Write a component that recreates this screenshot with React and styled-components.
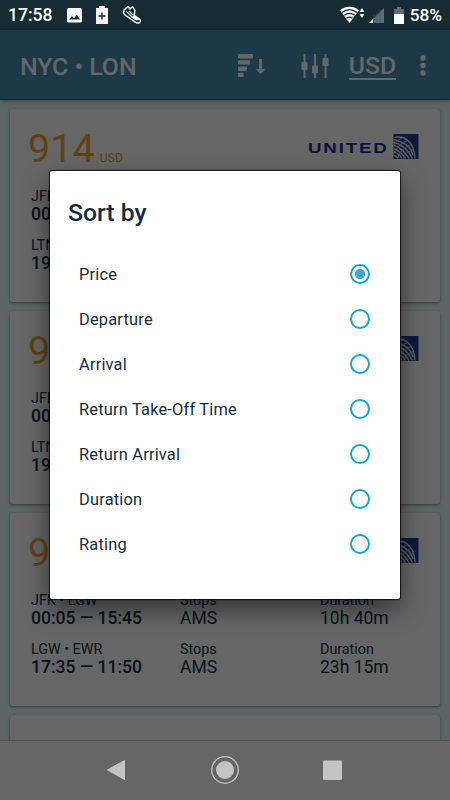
import React, { useState } from 'react';
import styled, { createGlobalStyle } from 'styled-components';

const GlobalStyle = createGlobalStyle`
  * {
    box-sizing: border-box;
  }

  body {
    margin: 0;
    font-family: Roboto, sans-serif;
  }
`;

const Screen = styled.div`
  position: relative;
  width: 450px;
  height: 800px;
  display: flex;
  flex-direction: column;
  overflow: hidden;
  background: #e9fafa;
`;

const StatusBar = styled.header`
  flex: none;
  height: 30px;
  display: flex;
  align-items: center;
  padding: 0 8px 0 8px;
  background: #172b35;
  color: white;
  font-size: 17.5px;
  font-weight: 500;
  line-height: 30px;
`;

const StatusGroup = styled.div`
  height: 30px;
  display: flex;
  align-items: center;
  margin-left: ${props => props.$end ? 'auto' : '15px'};
  gap: ${props => props.$gap};
`;

const BatteryIcon = styled.svg`
  margin-left: 6px;
`;

const Percent = styled.span`
  margin-left: 2px;
  font-size: 17.3px;
`;

const AppBar = styled.nav`
  flex: none;
  height: 70px;
  display: flex;
  align-items: center;
  padding: 2px 24px 0 20px;
  background: #4690b2;
  border-bottom: 1px solid #20779d;
  box-shadow: 0 1px 4px rgba(0, 0, 0, 0.35);
  color: white;
`;

const Route = styled.h1`
  flex: 1;
  margin: 2px 0 0;
  font-size: 24.8px;
  font-weight: 500;
`;

const Actions = styled.div`
  display: flex;
  align-items: center;
`;

const ActionIcons = styled.div`
  display: flex;
  gap: 35px;
`;

const Currency = styled.span`
  margin: 3px 24px 0 20px;
  border-bottom: 2px solid white;
  font-size: 24.7px;
  font-weight: 500;
  line-height: 24px;
`;

const Results = styled.main`
  flex: 1;
  min-height: 0;
  display: flex;
  flex-direction: column;
  gap: 9px;
  padding: 9px 10px 0;
  overflow: hidden;
`;

const Card = styled.article`
  flex: none;
  height: 193px;
  padding: 18px 20px 0 18px;
  border-radius: 3px;
  background: white;
  box-shadow: 0 1px 3px rgba(0, 0, 0, 0.45);
  color: #12344c;
`;

const CardTop = styled.div`
  height: 46px;
  display: flex;
  justify-content: space-between;
`;

const Price = styled.div`
  color: #f5a42c;
  font-size: 39.6px;
  font-weight: 400;
  line-height: 44px;

  small {
    margin-left: 5px;
    font-size: 12.3px;
    font-weight: 400;
  }
`;

const Flight = styled.div`
  height: 49px;
  display: grid;
  grid-template-columns: 149px 140px 1fr;
  padding: 15px 0 0 3px;
`;

const Label = styled.div`
  font-size: 14.3px;
  line-height: 17px;
`;

const Value = styled.div`
  font-size: 17.5px;
  font-weight: ${props => props.$strong ? 500 : 400};
  line-height: 19px;
  white-space: nowrap;
`;

const NavBar = styled.footer`
  flex: none;
  height: 60px;
  display: flex;
  justify-content: center;
  border-top: 1px solid #505354;
  background: #666;
`;

const Scrim = styled.div`
  position: absolute;
  top: 30px;
  right: 0;
  bottom: 60px;
  left: 0;
  display: flex;
  justify-content: center;
  align-items: center;
  background: rgba(0, 0, 0, 0.6);
`;

const Dialog = styled.section`
  width: 350px;
  height: 428px;
  padding: 25px 30px 0 18px;
  border-radius: 2px;
  background: white;
  box-shadow: 0 0 1px 1px rgba(0, 0, 0, 0.75), 0 10px 24px rgba(0, 0, 0, 0.5);
  color: #142c3c;
`;

const DialogTitle = styled.h2`
  margin: 0 0 21px;
  font-size: 24.7px;
  font-weight: 500;
  line-height: 34px;
`;

const Option = styled.label`
  height: 45px;
  display: flex;
  align-items: center;
  justify-content: space-between;
  padding: 1px 0 0 11px;
  font-size: 16.4px;
  letter-spacing: 0.2px;
`;

const Radio = styled.input`
  appearance: none;
  width: 20px;
  height: 20px;
  margin: 0 0 1px;
  border: 2px solid #0fa8c8;
  border-radius: 50%;
  background: ${props => props.checked ? 'radial-gradient(circle, #3aabc8 4.8px, transparent 5.4px)' : 'none'};
`;

const UnitedLogo = () => (
  <svg width="113" height="34" viewBox="0 0 113 34">
    <text
      x="1"
      y="26"
      textLength="80.5"
      fontFamily="Liberation Sans, sans-serif"
      fontSize="15.5"
      fontWeight="700"
      letterSpacing="1.5"
      lengthAdjust="spacingAndGlyphs"
      fill="#16349a"
    >
      UNITED
    </text>
    <g transform="translate(86.5 6)">
      <path fill="#1c4097" d="M0 1h25v25H0z" />
      <g fill="none" stroke="#dfe6f4" strokeWidth="1.4">
        <path d="M1 4.5C12 2 21 10 21.5 25.5" />
        <path d="M0 6.500Q16 10 19.500 22" />
        <path d="M0 9Q13 13 19 25.500" />
        <path d="M0 12Q10 16 15.500 25.500" />
        <path d="M0 15.500Q8 19 12 25.500" />
        <path d="M0 19Q6 21 8.500 25.500" />
        <path d="M0 22.500Q3 23 4.500 25.500" />
        <path strokeWidth="0.9" d="M0 12C3 8 6 6 9 5M0 21C4 13 9 9 15 7.5M4 25.5c3-8 8-12 14-14M10 25.500c2-5 6-8 10-9" />
      </g>
    </g>
  </svg>
);

const NotificationIcons = () => (
  <StatusGroup $gap="13px">
    <svg width="15" height="15" viewBox="0 0 15 15">
      <rect width="15" height="14.5" rx="1.5" fill="#fff" />
      <path d="M2 11.5 5 8l2 2.3L9.8 6.8 13 11.5z" fill="#172b35" />
    </svg>
    <svg width="14" height="18" viewBox="0 0 14 18">
      <path d="M4 0h6v2h3v16H1V2h3z" fill="#fff" />
      <path d="M7 6.5v7M3.5 10h7" stroke="#172b35" strokeWidth="1.5" />
    </svg>
    <svg width="20" height="20" viewBox="0 0 20 20">
      <path
        d="M1.5 8 2 5 6 1.5 8 4 10.5 1.5 13 5.500 12 10 18 14.500C19.5 18 16 19 13 17L3 10z"
        fill="none"
        stroke="#fff"
        strokeWidth="1.4"
        strokeLinejoin="round"
      />
      <path d="m4.5 6.5 6 6M7 6l4 4" stroke="#fff" strokeWidth="1.1" />
      <path d="m9.5 12.5 2.500-2.500 6 4.500-4 1z" fill="#fff" />
    </svg>
  </StatusGroup>
);

const SystemIcons = () => (
  <StatusGroup $end $gap="4px">
    <svg width="25" height="18" viewBox="0 0 25 18">
      <path d="M0 4.3C5.5-.3 13.5-.3 19 4.3L9.5 17z" fill="#fff" />
      <g fill="none" stroke="#172b35" strokeWidth="1.2">
        <path d="M2 6.5c5-3.7 10-3.7 15 0" />
        <path d="M4.3 9.3c3.5-2.5 7-2.5 10.5 0" />
        <path d="M6.5 12.2c2-1.4 4-1.4 6 0" />
      </g>
      <path d="m22 2 2.5 4h-5zM22 12l2.500-4h-5z" fill="#fff" />
    </svg>
    <svg width="15" height="15" viewBox="0 0 15 15">
      <path d="M0 15 15 0v15z" fill="#5c6d75" />
      <path d="m0 15 4-4v4z" fill="#fff" />
      <path d="M5 7v8M8 5v10M11 2v13" stroke="#42535c" strokeWidth="0.7" />
    </svg>
    <BatteryIcon width="10" height="17" viewBox="0 0 10 17">
      <path d="M3 0h4v2h3v6H0V2h3z" fill="#5c6d75" />
      <path d="M0 7h10v10H0z" fill="#fff" />
    </BatteryIcon>
    <Percent>58%</Percent>
  </StatusGroup>
);

const SortIcon = () => (
  <svg width="28" height="24" viewBox="0 0 28 24">
    <g fill="#fff">
      <rect width="15" height="4.5" rx="1" />
      <rect y="6.3" width="12" height="4.3" rx="1" />
      <rect y="12.6" width="9" height="4.3" rx="1" />
      <rect y="18.7" width="5.7" height="4.3" rx="1" />
      <path d="M21 5h3v10h3.5l-5 5-5-5H21z" />
    </g>
  </svg>
);

const FilterIcon = () => (
  <svg width="28" height="24" viewBox="0 0 28 24">
    <path d="M3.5 0v24M14 0v24M24.5 0v24" stroke="#fff" strokeWidth="2" />
    <g fill="#fff">
      <rect x="0.5" y="8" width="6" height="8" rx="1" />
      <rect x="11" y="11.5" width="6" height="8" rx="1" />
      <rect x="21.5" y="4" width="6" height="8" rx="1" />
    </g>
  </svg>
);

const TopBar = () => (
  <AppBar>
    <Route>NYC • LON</Route>
    <Actions>
      <ActionIcons>
        <SortIcon />
        <FilterIcon />
      </ActionIcons>
      <Currency>USD</Currency>
      <svg width="6" height="22" viewBox="0 0 6 22" fill="#fff">
        <circle cx="3" cy="3" r="2.7" />
        <circle cx="3" cy="10.5" r="2.7" />
        <circle cx="3" cy="18" r="2.7" />
      </svg>
    </Actions>
  </AppBar>
);

const firstLegs = [
  { route: 'JFK • LTN', time: '00:05 — 15:45', stops: 'AMS', duration: '10h 40m' },
  { route: 'LTN • EWR', time: '19:35 — 11:50', stops: 'AMS', duration: '21h 15m' }
];

const results = [
  { price: 914, legs: firstLegs },
  { price: 914, legs: firstLegs },
  {
    price: 914,
    legs: [
      { route: 'JFK • LGW', time: '00:05 — 15:45', stops: 'AMS', duration: '10h 40m' },
      { route: 'LGW • EWR', time: '17:35 — 11:50', stops: 'AMS', duration: '23h 15m' }
    ]
  }
];

const sortOptions = [
  'Price',
  'Departure',
  'Arrival',
  'Return Take-Off Time',
  'Return Arrival',
  'Duration',
  'Rating'
];

const FlightCard = ({ price, legs }) => (
  <Card>
    <CardTop>
      <Price>{price}<small>USD</small></Price>
      <UnitedLogo />
    </CardTop>
    {legs.map(leg => (
      <Flight key={leg.route}>
        <div>
          <Label>{leg.route}</Label>
          <Value $strong>{leg.time}</Value>
        </div>
        <div>
          <Label>Stops</Label>
          <Value>{leg.stops}</Value>
        </div>
        <div>
          <Label>Duration</Label>
          <Value>{leg.duration}</Value>
        </div>
      </Flight>
    ))}
  </Card>
);

const App = () => {
  const [sort, setSort] = useState('Price');

  return (
    <>
      <GlobalStyle />
      <Screen>
        <StatusBar>
          17:58
          <NotificationIcons />
          <SystemIcons />
        </StatusBar>
        <TopBar />
        <Results>
          {results.map((result, index) => <FlightCard key={index} {...result} />)}
          <Card />
        </Results>
        <NavBar>
          <svg width="236" height="59" viewBox="0 0 236 59" fill="#c4c4c4">
            <path d="M0.5 29 17.500 19.500v19z" stroke="#c4c4c4" strokeLinejoin="round" />
            <circle cx="118" cy="29" r="13.3" fill="none" stroke="#c4c4c4" strokeWidth="1.3" />
            <circle cx="118" cy="29" r="9" />
            <rect x="216" y="19.5" width="19" height="19.5" rx="1" />
          </svg>
        </NavBar>
        <Scrim>
          <Dialog>
            <DialogTitle>Sort by</DialogTitle>
            {sortOptions.map(option => (
              <Option key={option}>
                {option}
                <Radio
                  type="radio"
                  name="sort"
                  checked={sort === option}
                  onChange={() => setSort(option)}
                />
              </Option>
            ))}
          </Dialog>
        </Scrim>
      </Screen>
    </>
  );
};

export default App;
